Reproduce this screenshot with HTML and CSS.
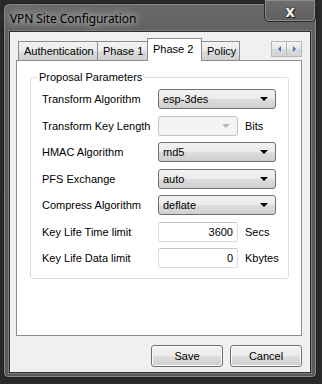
FILE: index.html
```html
<!DOCTYPE html>
<html>
<head>
<meta charset="utf-8">
<link rel="stylesheet" href="styles.css">
</head>
<body>
<div class="window">
  <div class="titlebar">
    <span class="title">VPN Site Configuration</span>
    <div class="close"><span class="x">x</span></div>
  </div>
  <div class="client">
    <div class="tabstrip">
      <div class="tab">Authentication</div>
      <div class="tab">Phase 1</div>
      <div class="tab active">Phase 2</div>
      <div class="tab">Policy</div>
      <div class="spin">
        <div class="spinbtn"><span class="tri left"></span></div>
        <div class="spinbtn"><span class="tri right"></span></div>
      </div>
    </div>
    <div class="panel">
      <div class="group">
        <div class="legend">Proposal Parameters</div>
        <div class="rows">
          <div class="label">Transform Algorithm</div>
          <div class="ctl"><div class="combo wide"><span>esp-3des</span><i class="arrow"></i></div></div>
          <div class="label">Transform Key Length</div>
          <div class="ctl"><div class="combo narrow disabled"><span></span><i class="arrow"></i></div><span class="unit">Bits</span></div>
          <div class="label">HMAC Algorithm</div>
          <div class="ctl"><div class="combo wide"><span>md5</span><i class="arrow"></i></div></div>
          <div class="label">PFS Exchange</div>
          <div class="ctl"><div class="combo wide"><span>auto</span><i class="arrow"></i></div></div>
          <div class="label">Compress Algorithm</div>
          <div class="ctl"><div class="combo wide"><span>deflate</span><i class="arrow"></i></div></div>
          <div class="label">Key Life Time limit</div>
          <div class="ctl"><div class="edit">3600</div><span class="unit">Secs</span></div>
          <div class="label">Key Life Data limit</div>
          <div class="ctl"><div class="edit">0</div><span class="unit">Kbytes</span></div>
        </div>
      </div>
    </div>
    <div class="buttons">
      <div class="btn">Save</div>
      <div class="btn">Cancel</div>
    </div>
  </div>
</div>
</body>
</html>
```
FILE: styles.css
```css
html, body {
  margin: 0;
  padding: 0;
  background: #2a2a2a;
  width: 322px;
  height: 384px;
  overflow: hidden;
}
.window {
  margin: 3px 3px 0 3px;
  width: 314px;
  height: 375px;
  box-sizing: border-box;
  background: linear-gradient(#6a6a6a, #5c5c5c 40px, #5a5a5a);
  border: 1px solid #1e1e1e;
  border-radius: 6px 6px 5px 5px;
  box-shadow: inset 0 0 0 1px #8a8a8a;
  display: flex;
  flex-direction: column;
  font-family: "Liberation Sans", Arial, sans-serif;
  font-size: 11px;
  color: #000;
}
.titlebar {
  height: 27px;
  display: flex;
  justify-content: space-between;
  align-items: flex-start;
  flex: none;
}
.title {
  font-family: "Noto Sans", "Open Sans", sans-serif;
  font-size: 12px;
  color: #000;
  margin: 6px 0 0 6px;
  letter-spacing: -0.1px;
  text-shadow: 0 0 6px #c8c8c8, 0 0 10px #b0b0b0, 0 0 14px #a0a0a0;
}
.close {
  margin: -4px 0 0 0;
  width: 52px;
  height: 22px;
  box-sizing: border-box;
  border: 1px solid #2a2a2a;
  border-top: none;
  border-radius: 0 0 5px 5px;
  background: linear-gradient(#6e6e6e, #5e5e5e);
  box-shadow: inset 0 0 0 1px #8c8c8c;
  display: flex;
  align-items: center;
  justify-content: center;
}
.x {
  font-family: "DejaVu Sans", sans-serif;
  font-weight: bold;
  font-size: 15px;
  line-height: 14px;
  margin-top: 2px;
  color: #f2f2f2;
  text-shadow: 0 0 1px #000, 0 0 1px #000, 1px 1px 1px #222;
}
.client {
  margin: 0 5px 4px 5px;
  flex: 1;
  background: #f0f0f0;
  border: 1px solid #2f2f2f;
  box-shadow: 0 0 0 1px #7a7a7a;
  padding: 6px 8px 0 6px;
  display: flex;
  flex-direction: column;
}
.tabstrip {
  display: flex;
  align-items: flex-end;
  height: 22px;
  padding-left: 2px;
  position: relative;
  z-index: 1;
}
.tab {
  height: 19px;
  box-sizing: border-box;
  border: 1px solid #898c95;
  border-bottom: none;
  margin-right: -1px;
  padding: 3px 5px 0 5px;
  background: linear-gradient(#f2f2f2, #ebebeb 50%, #dddddd 51%, #cfcfcf);
  white-space: nowrap;
}
.tab:nth-child(1) { width: 80px; }
.tab:nth-child(2) { width: 51px; }
.tab:nth-child(4) { width: 39px; }
.tab.active {
  height: 23px;
  width: 55px;
  margin-bottom: -1px;
  background: #fff;
  padding-top: 4px;
  position: relative;
  z-index: 2;
}
.spin {
  margin-left: auto;
  display: flex;
  align-self: flex-start;
  margin-top: 3px;
}
.spinbtn {
  width: 16px;
  height: 16px;
  box-sizing: border-box;
  border: 1px solid #b9b9b9;
  background: linear-gradient(#f4f4f4, #e8e8e8 50%, #dadada 51%, #d4d4d4);
  display: flex;
  align-items: center;
  justify-content: center;
}
.spinbtn + .spinbtn { margin-left: -1px; }
.tri {
  width: 0;
  height: 0;
  border-top: 3px solid transparent;
  border-bottom: 3px solid transparent;
}
.tri.left { border-right: 3px solid #4a6fb5; }
.tri.right { border-left: 3px solid #4a6fb5; }
.panel {
  height: 276px;
  box-sizing: border-box;
  background: #fff;
  border: 1px solid #898c95;
  padding: 16px 12px 0 13px;
}
.group {
  height: 202px;
  box-sizing: border-box;
  border: 1px solid #d5dfe5;
  border-radius: 3px;
  padding: 0 0 0 11px;
}
.legend {
  display: block;
  width: max-content;
  height: 13px;
  margin: -7px 0 0 -5px;
  padding: 0 2px;
  background: #fff;
  line-height: 13px;
}
.rows {
  margin-top: 5px;
  display: grid;
  grid-template-columns: 116px 1fr;
  grid-auto-rows: 20px;
  row-gap: 6.5px;
  align-items: center;
}
.ctl {
  display: flex;
  align-items: center;
  height: 20px;
}
.combo {
  height: 20px;
  box-sizing: border-box;
  border: 1px solid #707070;
  border-radius: 3px;
  background: linear-gradient(#f2f2f2, #ebebeb 50%, #dddddd 51%, #cfcfcf);
  display: flex;
  align-items: center;
  justify-content: space-between;
  padding: 0 7px 0 4px;
}
.combo.wide { width: 118px; }
.combo.narrow { width: 80px; }
.combo.disabled {
  border-color: #c3c3c3;
  background: #f4f4f4;
}
.arrow {
  width: 0;
  height: 0;
  border-left: 4px solid transparent;
  border-right: 4px solid transparent;
  border-top: 4px solid #000;
}
.disabled .arrow { border-top-color: #b5b5b5; }
.edit {
  width: 80px;
  height: 20px;
  box-sizing: border-box;
  border: 1px solid #dcdcdc;
  border-top-color: #c5c5c5;
  border-radius: 2px;
  background: #fff;
  text-align: right;
  padding: 3px 4px 0 0;
}
.unit { margin-left: 7px; }
.buttons {
  display: flex;
  justify-content: flex-end;
  gap: 7px;
  margin-top: 9px;
}
.btn {
  width: 72px;
  height: 22px;
  box-sizing: border-box;
  border: 1px solid #707070;
  border-radius: 3px;
  background: linear-gradient(#f2f2f2, #ebebeb 50%, #dddddd 51%, #cfcfcf);
  box-shadow: inset 0 0 0 1px #fcfcfc;
  display: flex;
  align-items: center;
  justify-content: center;
}
```
